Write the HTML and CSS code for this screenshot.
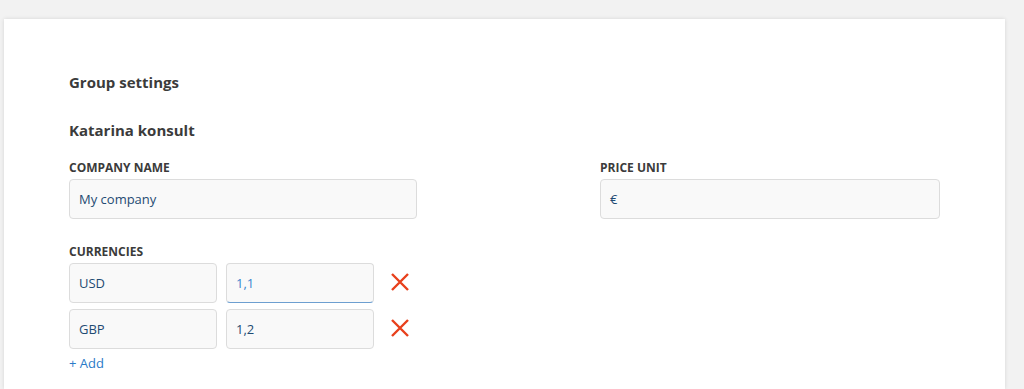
FILE: index.html
```html
<!DOCTYPE html>
<html lang="en">
<head>
    <meta charset="UTF-8">
    <meta name="viewport" content="width=device-width, initial-scale=1.0">
    <title>Group settings</title>
    <link rel="stylesheet" href="styles.css">
</head>
<body>
    <div class="card">
        <h2 class="title">Group settings</h2>
        <h3 class="group-name">Katarina konsult</h3>

        <div class="field-row">
            <div class="field field-company">
                <label class="label">Company name</label>
                <div class="input">My company</div>
            </div>
            <div class="field field-price">
                <label class="label">Price unit</label>
                <div class="input">€</div>
            </div>
        </div>

        <div class="currencies">
            <label class="label">Currencies</label>
            <div class="currency-row">
                <div class="input input-small">USD</div>
                <div class="input input-small input-focus">1,1</div>
                <button class="remove" title="Remove">
                    <svg width="20" height="20" viewBox="0 0 20 20"><path d="M2 2 L18 18 M18 2 L2 18" stroke="#e8401c" stroke-width="2.4" fill="none"/></svg>
                </button>
            </div>
            <div class="currency-row">
                <div class="input input-small">GBP</div>
                <div class="input input-small">1,2</div>
                <button class="remove" title="Remove">
                    <svg width="20" height="20" viewBox="0 0 20 20"><path d="M2 2 L18 18 M18 2 L2 18" stroke="#e8401c" stroke-width="2.4" fill="none"/></svg>
                </button>
            </div>
            <a class="add" href="#">+ Add</a>
        </div>
    </div>
</body>
</html>
```

FILE: styles.css
```css
* {
    margin: 0;
    padding: 0;
    box-sizing: border-box;
}

body {
    font-family: "Open Sans", Arial, sans-serif;
    background-color: #f2f2f2;
    color: #3b3b3b;
    height: 389px;
    overflow: hidden;
}

/* 卡片 */
.card {
    margin: 19px 0 0 4px;
    width: 1001px;
    height: 370px;
    background-color: #fff;
    box-shadow: 0 0 4px rgba(0, 0, 0, 0.12);
    padding: 53px 65px 0 65px;
}

.title {
    font-size: 15px;
    font-weight: 700;
    line-height: 20px;
}

.group-name {
    font-size: 15px;
    font-weight: 700;
    line-height: 20px;
    margin-top: 28px;
}

.field-row {
    display: flex;
    margin-top: 20px;
}

.field-company {
    width: 348px;
}

.field-price {
    width: 340px;
    margin-left: 183px;
}

.label {
    display: block;
    font-size: 12px;
    font-weight: 700;
    line-height: 16px;
    text-transform: uppercase;
    margin-bottom: 3px;
}

.input {
    height: 40px;
    border: 1px solid #dcdcdc;
    border-radius: 4px;
    background-color: #f9f9f9;
    padding: 0 9px;
    font-size: 13px;
    line-height: 38px;
    color: #1f4b73;
}

.currencies {
    margin-top: 25px;
}

.currency-row {
    display: flex;
    align-items: center;
    margin-bottom: 6px;
}

.currency-row:last-of-type {
    margin-bottom: 2px;
}

.input-small {
    width: 148px;
    margin-right: 9px;
}

.input-focus {
    color: #3a86cf;
    border-bottom-color: #6d9fd0;
}

.remove {
    border: none;
    background: none;
    width: 20px;
    height: 20px;
    margin: -3px 0 0 7px;
    cursor: pointer;
}

.remove svg {
    display: block;
}

.add {
    display: inline-block;
    color: #2a7bc8;
    font-size: 13px;
    line-height: 18px;
    text-decoration: none;
}
```
